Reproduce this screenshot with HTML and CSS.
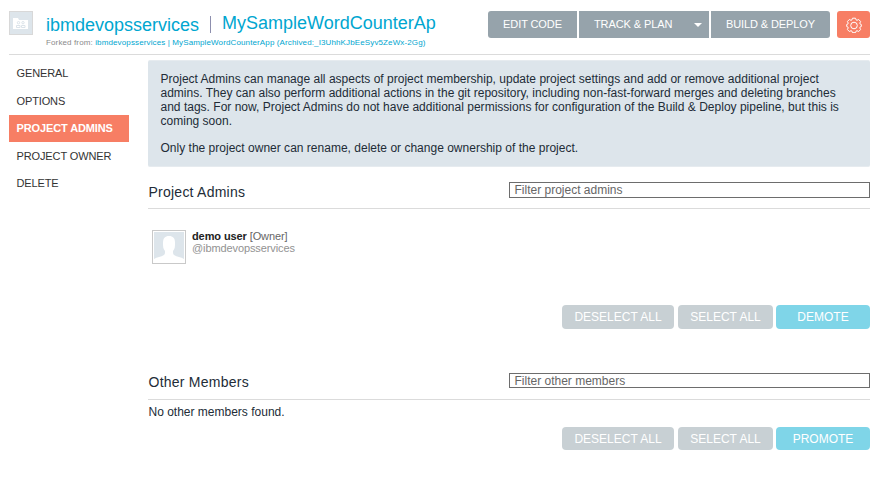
FILE: index.html
```html
<!DOCTYPE html>
<html lang="en">
<head>
<meta charset="utf-8">
<title>Project Admins</title>
<link rel="stylesheet" href="styles.css">
</head>
<body>
<header class="top">
  <svg class="project-icon" viewBox="0 0 24 24">
    <rect x=".5" y=".5" width="23" height="23" fill="#fff" stroke="#d8d8d8"/>
    <rect x="1" y="1" width="22" height="22" fill="#dde5eb"/>
    <path d="M4 7h5l1 2h9v9H4z" fill="#fff"/>
    <g fill="none" stroke="#d3dde4" stroke-width=".8"><circle cx="9.500" cy="11.700" r="1.200"/><circle cx="14" cy="11.700" r="1.200"/><path d="M7.500 16.500v-2h3.500v2zM12.500 16.500v-2H16v2z"/></g>
  </svg>
  <div class="titles">
    <div class="title"><a class="owner">ibmdevopsservices</a><span class="bar"></span><a class="name">MySampleWordCounterAp</a></div>
    <div class="fork">Forked from: <a>ibmdevopsservices | MySampleWordCounterApp (Archived:_I3UhhKJbEeSyv5ZeWx-2Gg)</a></div>
  </div>
  <nav class="actions">
    <a class="edit">EDIT CODE</a>
    <a class="track">TRACK &amp; PLAN<i class="caret"></i></a>
    <a class="build">BUILD &amp; DEPLOY</a>
    <a class="settings"><svg viewBox="0 0 16 16" fill="none" stroke="#fff"><path d="M6.500 1.200h3l.5 1.600 1 .5 1.700-.8 1.900 2-.8 1.600.4 1 1.100.4v2l-1.100.4-.4 1 .8 1.600-1.900 2-1.700-.8-1 .5-.5 1.500h-3L6 14.200l-1-.5-1.700.8-1.900-2 .8-1.600-.4-1L.7 9.500v-2l1.100-.4.4-1-.8-1.600 1.900-2 1.700.8 1-.5z"/><circle cx="8" cy="8.500" r="3.300"/></svg></a>
  </nav>
</header>
<div class="columns">
  <nav class="side">
    <a>GENERAL</a><a>OPTIONS</a><a class="active">PROJECT ADMINS</a><a>PROJECT OWNER</a><a>DELETE</a>
  </nav>
  <main>
    <section class="info">
      <p>Project Admins can manage all aspects of project membership, update project settings and add or remove additional project<br>admins. They can also perform additional actions in the git repository, including non-fast-forward merges and deleting branches<br>and tags. For now, Project Admins do not have additional permissions for configuration of the Build &amp; Deploy pipeline, but this is<br>coming soon.</p>
      <p>Only the project owner can rename, delete or change ownership of the project.</p>
    </section>
    <section class="admins">
      <div class="section-head"><h2>Project Admins</h2><div class="filter">Filter project admins</div></div>
      <div class="member">
        <svg class="avatar" viewBox="0 0 34 34"><rect x=".5" y=".5" width="33" height="33" fill="#fff" stroke="#c9c9c9"/><rect x="2" y="2" width="30" height="30" fill="#dde5eb"/><path d="M2 29c3-2 7-2 10-4 1-1 1-2 1-4-2-2-2-5-2-8 0-5 2-7 6-7s6 2 6 7c0 3 0 6-2 8 0 2 0 3 1 4 3 2 7 2 10 4v3H2z" fill="#fff"/></svg>
        <div class="who"><div><b>demo user</b> [Owner]</div><div class="handle">@ibmdevopsservices</div></div>
      </div>
      <div class="buttons"><a class="deselect">DESELECT ALL</a><a class="select">SELECT ALL</a><a class="primary">DEMOTE</a></div>
    </section>
    <section class="others">
      <div class="section-head"><h2>Other Members</h2><div class="filter">Filter other members</div></div>
      <p class="empty">No other members found.</p>
      <div class="buttons"><a class="deselect">DESELECT ALL</a><a class="select">SELECT ALL</a><a class="primary">PROMOTE</a></div>
    </section>
  </main>
</div>
</body>
</html>
```
FILE: styles.css
```css
* { box-sizing: border-box; }
body { margin: 0; padding: 0 10px 0 9px; background: #fff; color: #222c37; font: 12px/14px "Liberation Sans", Arial, sans-serif; }
p, h2 { margin: 0; }
.top { display: flex; height: 55px; padding-top: 11px; border-bottom: 1px solid #dbdbdb; }
.project-icon { width: 24px; height: 24px; flex: none; }
.titles { margin-left: 13px; white-space: nowrap; color: #8a8a8a; }
.titles a { color: #00a6d0; }
.title { display: flex; height: 26px; font-size: 18px; line-height: 22px; }
.owner { padding-top: 3px; width: 153px; }
.bar { width: 1px; height: 17px; margin: 5px 11px 0 11px; background: #8d8fae; }
.name { padding-top: 1px; }
.fork { font-size: 8px; line-height: 12px; letter-spacing: .125px; }
.actions { display: flex; gap: 2px; margin-left: auto; height: 27px; color: #fff; font-size: 11px; line-height: 26px; letter-spacing: -.1px; }
.actions a { background: #96a3ab; text-align: center; white-space: nowrap; }
.actions .edit { width: 89px; border-radius: 3px 0 0 3px; }
.actions .track { display: flex; width: 130px; padding-left: 15px; }
.caret { height: 4px; margin: 12px 7px 0 auto; border: 4px solid transparent; border-top-color: #fff; border-bottom: 0; }
.actions .build { width: 119px; border-radius: 0 3px 3px 0; }
.actions .settings { display: flex; align-items: center; justify-content: center; width: 33px; margin-left: 5px; border-radius: 3px; background: #f77e64; }
.settings svg { width: 16px; height: 16px; }
.columns { display: flex; }
.side { display: flex; flex-direction: column; width: 120px; padding-top: 5px; font-size: 11px; line-height: 27px; letter-spacing: -.12px; color: #333; }
.side a { height: 27.500px; padding-left: 7.500px; white-space: nowrap; }
.side .active { height: 27px; margin-bottom: .5px; background: #f77e64; color: #fff; font-weight: bold; }
main { width: 722px; margin-left: 19px; padding-top: 5px; }
.info { height: 107px; padding: 11px 12px 0 12.500px; border: solid #e6ebef; border-width: 1px 0; border-radius: 2px; background: #dde5eb; white-space: nowrap; letter-spacing: .01px; }
.info p + p { margin-top: 13px; }
.section-head { display: flex; justify-content: space-between; border-bottom: 1px solid #dbdbdb; }
h2 { padding-left: .5px; font-size: 14px; line-height: 20px; font-weight: normal; letter-spacing: .24px; }
.filter { width: 361px; height: 16px; padding-left: 4.500px; border: 1px solid #6d6d6d; color: #666; line-height: 14px; }
.admins .section-head { height: 27px; margin-top: 15px; }
.member { display: flex; gap: 6px; margin: 21px 0 0 4px; font-size: 11px; line-height: 12px; letter-spacing: -.1px; color: #666; }
.avatar { width: 34px; height: 34px; }
.who b { color: #222; }
.handle { color: #929292; }
.buttons { display: flex; justify-content: flex-end; height: 24px; color: #fff; line-height: 24px; text-align: center; }
.buttons a { border-radius: 4px; background: #c8d0d4; white-space: nowrap; }
.buttons .deselect { width: 112px; margin-right: 4px; }
.buttons .select { width: 95px; margin-right: 3px; }
.buttons .primary { width: 94px; background: #7fd5e8; }
.admins .buttons { margin-top: 41px; }
.others .section-head { height: 27px; margin-top: 44px; }
.others h2 { line-height: 18px; }
.others .filter { height: 15px; line-height: 14px; }
.empty { margin-top: 5px; padding-left: .5px; }
.others .buttons { height: 23px; margin-top: 8px; }
```
